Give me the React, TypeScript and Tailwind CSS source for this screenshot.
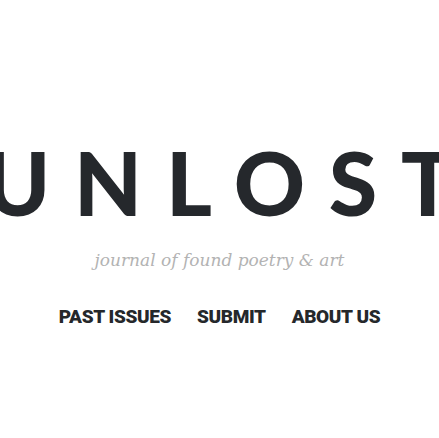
export default function App() {
  return (
    <div className="h-[438px] w-full overflow-hidden bg-white">
      {/* Masthead */}
      <header className="flex flex-col items-center pt-[130px]">
        <div className="flex w-full justify-center overflow-hidden">
          <h1 className="shrink-0 whitespace-nowrap pl-[0.27em] font-['Lato',sans-serif] text-[88px] font-black leading-[104px] tracking-[0.27em] text-[#25282c]">
            UNLOST
          </h1>
        </div>
        <p className="mt-[14px] font-['DejaVu_Serif',serif] text-[17px] italic text-[#b3b3b3]">
          journal of found poetry &amp; art
        </p>
      </header>

      {/* Nav */}
      <nav className="mt-[29px] flex items-center justify-center gap-[26px] font-['Roboto',sans-serif] text-[19px] font-black uppercase tracking-[-0.02em] text-[#25282b]">
        <a href="#">Past Issues</a>
        <a href="#">Submit</a>
        <a href="#">About Us</a>
      </nav>
    </div>
  );
}
